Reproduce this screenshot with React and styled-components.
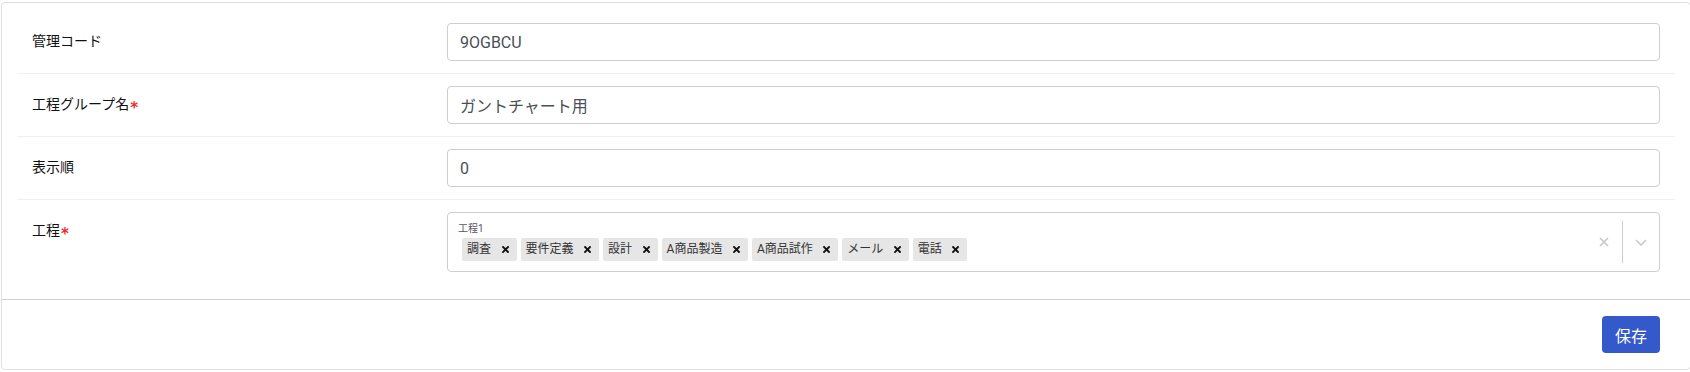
import React from 'react';
import styled, { createGlobalStyle } from 'styled-components';

const GlobalStyle = createGlobalStyle`
   html, body {
      margin: 0;
      padding: 0;
      background: #fff;
      overflow: hidden;
   }
   body {
      font-family: Roboto, "Noto Sans CJK JP", sans-serif;
      color: #212529;
   }
   * {
      box-sizing: border-box;
   }
`;

const processes = ['調査', '要件定義', '設計', 'A商品製造', 'A商品試作', 'メール', '電話'];

const fields = [
   { label: '管理コード', value: '9OGBCU' },
   { label: '工程グループ名', value: 'ガントチャート用', required: true },
   { label: '表示順', value: '0' },
];

const App = () => {
   return (
      <StyledPage>
         <GlobalStyle />
         <StyledCard>
            <StyledBody>
               {fields.map((f) => (
                  <StyledRow key={f.label}>
                     <StyledLabel>
                        {f.label}
                        {f.required && <StyledRequired>*</StyledRequired>}
                     </StyledLabel>
                     <StyledInput type="text" defaultValue={f.value} />
                  </StyledRow>
               ))}
               <StyledRow $last>
                  <StyledLabel>
                     工程<StyledRequired>*</StyledRequired>
                  </StyledLabel>
                  <StyledSelect>
                     <StyledValues>
                        <StyledCaption>工程1</StyledCaption>
                        <StyledTags>
                           {processes.map((p) => (
                              <StyledTag key={p}>
                                 <StyledTagText>{p}</StyledTagText>
                                 <StyledTagRemove>
                                    <svg width="7" height="7" viewBox="0 0 7 7">
                                       <path d="M1 1L6 6M6 1L1 6" stroke="#111" strokeWidth="1.9" strokeLinecap="square" />
                                    </svg>
                                 </StyledTagRemove>
                              </StyledTag>
                           ))}
                        </StyledTags>
                     </StyledValues>
                     <StyledIndicators>
                        <StyledClear>
                           <svg width="10" height="10" viewBox="0 0 10 10">
                              <path d="M1 1L9 9M9 1L1 9" stroke="#c8c8c8" strokeWidth="1.7" />
                           </svg>
                        </StyledClear>
                        <StyledSeparator />
                        <svg width="12" height="7" viewBox="0 0 12 7">
                           <path d="M1 1L6 6L11 1" fill="none" stroke="#c8c8c8" strokeWidth="1.6" />
                        </svg>
                     </StyledIndicators>
                  </StyledSelect>
               </StyledRow>
            </StyledBody>
            <StyledFooter>
               <StyledButton type="button">保存</StyledButton>
            </StyledFooter>
         </StyledCard>
      </StyledPage>
   );
};

const StyledPage = styled.div`
   padding: 2px 0 0 1px;
`;

const StyledCard = styled.div`
   width: 1690px;
   background: #fff;
   border: 1px solid #dfdfe6;
   border-radius: 4px;
`;

const StyledBody = styled.div`
   padding: 8px 15px 15px;
`;

const StyledRow = styled.div`
   display: grid;
   grid-template-columns: 415px 1fr;
   align-items: start;
   padding: 12px 15px;
   border-bottom: ${(p) => (p.$last ? 'none' : '1px solid #f0f0f0')};
`;

const StyledLabel = styled.div`
   padding-top: 8px;
   font-size: 14px;
   line-height: 21px;
   color: #111;
`;

const StyledRequired = styled.span`
   display: inline-block;
   margin-left: 1px;
   font-family: "DejaVu Sans", sans-serif;
   font-size: 15px;
   font-weight: bold;
   line-height: 1;
   color: #e8302f;
   vertical-align: -4px;
`;

const StyledInput = styled.input`
   width: 100%;
   height: 38px;
   margin: 0;
   padding: 0 12px;
   border: 1px solid #cdcdd4;
   border-radius: 4px;
   font-family: Roboto, "Noto Sans CJK JP", sans-serif;
   font-size: 16px;
   color: #495057;
   background: #fff;
   outline: none;
`;

const StyledSelect = styled.div`
   display: flex;
   min-height: 60px;
   border: 1px solid #cdcdd4;
   border-radius: 4px;
   background: #fff;
`;

const StyledValues = styled.div`
   flex: 1;
   padding: 9px 10px 10px;
`;

const StyledCaption = styled.div`
   font-size: 10px;
   line-height: 14px;
   color: #5d5566;
`;

const StyledTags = styled.div`
   display: flex;
   flex-wrap: wrap;
   gap: 4px;
   margin-top: 2px;
   padding-left: 4px;
`;

const StyledTag = styled.div`
   display: flex;
   align-items: center;
   height: 23px;
   padding: 0 8px 0 5px;
   background: #e6e6e6;
   border-radius: 2px;
`;

const StyledTagText = styled.span`
   font-size: 12px;
   line-height: 23px;
   color: #333;
`;

const StyledTagRemove = styled.span`
   display: flex;
   margin-left: 10.5px;
`;

const StyledIndicators = styled.div`
   display: flex;
   align-items: center;
   padding-right: 12px;
`;

const StyledClear = styled.span`
   display: flex;
   margin-right: 13px;
`;

const StyledSeparator = styled.span`
   width: 1px;
   height: 42px;
   margin-right: 12px;
   background: #cccccc;
`;

const StyledFooter = styled.div`
   display: flex;
   justify-content: flex-end;
   padding: 16px 30px 16px;
   border-top: 1px solid #cfcfcf;
`;

const StyledButton = styled.button`
   height: 37px;
   padding: 0 13px;
   border: none;
   border-radius: 4px;
   background: #3459cb;
   color: #fff;
   font-family: Roboto, "Noto Sans CJK JP", sans-serif;
   font-size: 16px;
   cursor: pointer;
`;

export default App;
